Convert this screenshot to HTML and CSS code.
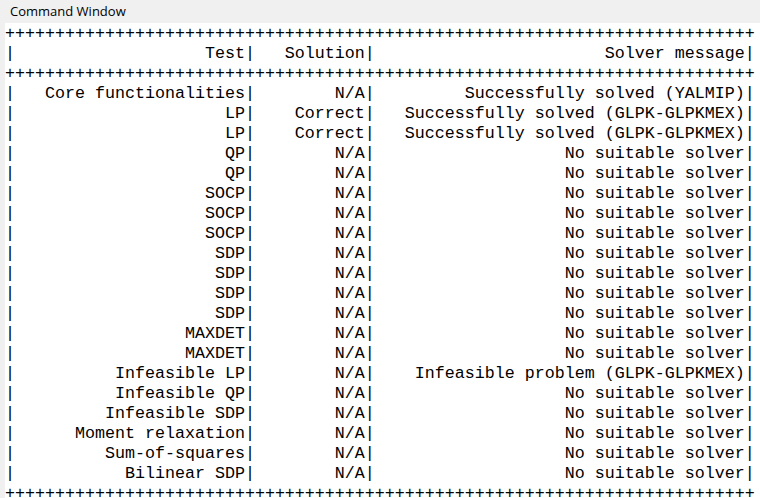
FILE: index.html
```html
<!DOCTYPE html>
<html>
<head>
<meta charset="utf-8">
<link rel="stylesheet" href="styles.css">
</head>
<body>
<div class="window">
<div class="title">Command Window</div>
<div class="console"><pre class="output">+++++++++++++++++++++++++++++++++++++++++++++++++++++++++++++++++++++++++++
|                   Test|   Solution|                       Solver message|
+++++++++++++++++++++++++++++++++++++++++++++++++++++++++++++++++++++++++++
|   Core functionalities|        N/A|         Successfully solved (YALMIP)|
|                     LP|    Correct|   Successfully solved (GLPK-GLPKMEX)|
|                     LP|    Correct|   Successfully solved (GLPK-GLPKMEX)|
|                     QP|        N/A|                   No suitable solver|
|                     QP|        N/A|                   No suitable solver|
|                   SOCP|        N/A|                   No suitable solver|
|                   SOCP|        N/A|                   No suitable solver|
|                   SOCP|        N/A|                   No suitable solver|
|                    SDP|        N/A|                   No suitable solver|
|                    SDP|        N/A|                   No suitable solver|
|                    SDP|        N/A|                   No suitable solver|
|                    SDP|        N/A|                   No suitable solver|
|                 MAXDET|        N/A|                   No suitable solver|
|                 MAXDET|        N/A|                   No suitable solver|
|          Infeasible LP|        N/A|    Infeasible problem (GLPK-GLPKMEX)|
|          Infeasible QP|        N/A|                   No suitable solver|
|         Infeasible SDP|        N/A|                   No suitable solver|
|      Moment relaxation|        N/A|                   No suitable solver|
|         Sum-of-squares|        N/A|                   No suitable solver|
|           Bilinear SDP|        N/A|                   No suitable solver|
+++++++++++++++++++++++++++++++++++++++++++++++++++++++++++++++++++++++++++</pre></div>
</div>
</body>
</html>
```
FILE: styles.css
```css
html, body {
  margin: 0;
  padding: 0;
  background: #f0f0f0;
}
.window {
  width: 760px;
  height: 498px;
  display: flex;
  flex-direction: column;
  overflow: hidden;
}
.title {
  height: 23px;
  box-sizing: border-box;
  padding: 2px 0 0 10px;
  font-family: "Open Sans", "Noto Sans", sans-serif;
  font-size: 13px;
  line-height: 19px;
  color: #000000;
}
.console {
  flex: 1;
  margin-left: 5px;
  padding-top: 1px;
  background: #ffffff;
  overflow: hidden;
}
.output {
  margin: 0;
  font-family: "Liberation Mono", "Courier New", monospace;
  font-size: 16.66px;
  line-height: 20px;
  color: #000000;
  white-space: pre;
}
```
